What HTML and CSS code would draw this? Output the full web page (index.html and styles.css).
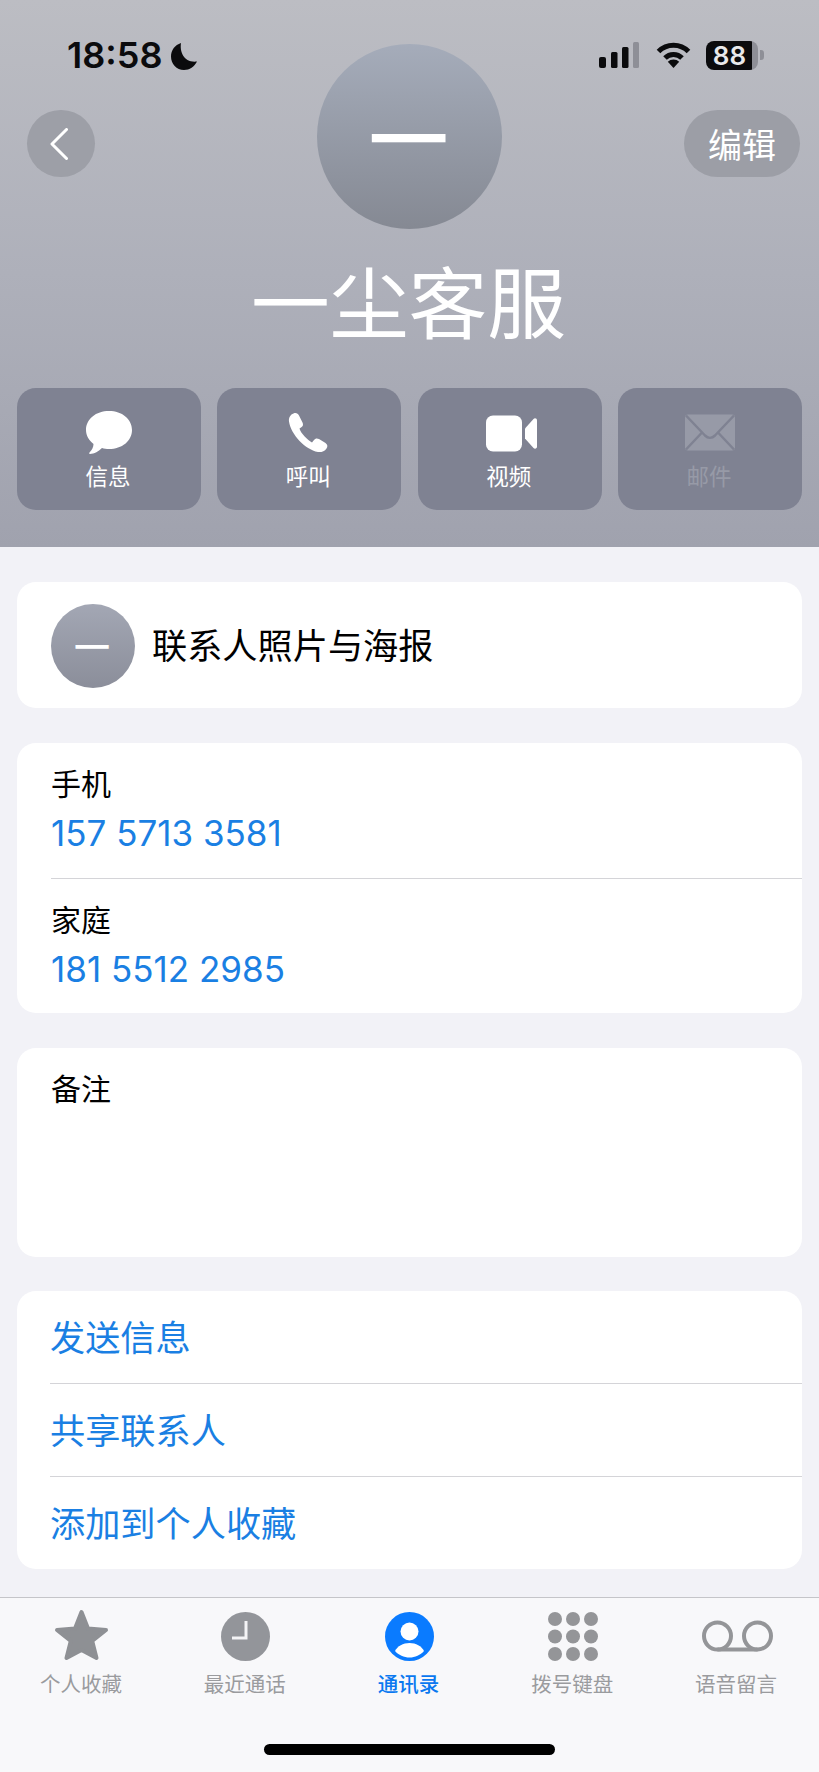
FILE: index.html
```html
<!DOCTYPE html>
<html lang="zh">
<head>
<meta charset="utf-8">
<title>一尘客服</title>
<link rel="stylesheet" href="styles.css">
</head>
<body>
<div class="phone">
  <header class="hero">
    <div class="status">
      <div class="status-left">
        <span class="time">18:58</span>
        <svg class="moon" width="26" height="27" viewBox="0 0 26 27"><path d="M10 0C8.500 9 13 20 26 18.500C23.500 23.500 18.500 27 13 27C5.500 27 0 21 0 13.500C0 7 4 2 10 0Z"/></svg>
      </div>
      <div class="status-right">
        <svg class="signal" width="40" height="26" viewBox="0 0 40 26"><rect x="0" y="15" width="7" height="11" rx="2"/><rect x="12" y="10" width="6.500" height="16" rx="1.500"/><rect x="23" y="5" width="6.500" height="21" rx="1.500"/><rect class="dim" x="34" y="0" width="6" height="26" rx="1.500"/></svg>
        <svg class="wifi" width="35" height="26" viewBox="0 0 35 26"><path class="arc" d="M2.500 9.500A21 21 0 0 1 32.500 9.500"/><path class="arc" d="M9 16A12 12 0 0 1 26 16"/><path d="M11.800 19.800A8 8 0 0 1 23.200 19.800L17.500 26Z"/></svg>
        <div class="battery"><div class="battery-body"><span class="battery-num">88</span></div><i class="battery-nub"></i></div>
      </div>
    </div>
    <div class="nav">
      <button class="round back" aria-label="返回"><svg width="18" height="32" viewBox="0 0 18 32"><path class="chev" d="M16.500 1.500L2 16L16.500 30.500"/></svg></button>
      <div class="avatar avatar-big"><span>一</span></div>
      <button class="round edit">编辑</button>
    </div>
    <h1 class="name">一尘客服</h1>
    <div class="actions">
      <div class="action">
        <svg width="46" height="43" viewBox="0 0 46 43"><path d="M23 0C36 0 46 8 46 19C46 30 36 38 23 38C20.500 38 18 37.700 16 37C13 40 8 43 4 43C3 43 3 42 3.500 41.500C6 39 7.500 36 7.500 33C3 29.500 0 24.500 0 19C0 8 10 0 23 0Z"/></svg>
        <span>信息</span>
      </div>
      <div class="action">
        <svg class="phone-ic" width="40" height="40" viewBox="0 0 40 40"><path d="M5.500 1C8 0 10 1 11 3L14.500 10C15.500 12 15 14 13 15L11.500 16C13 21 19 27 24 30L26 27.500C27 26 29 25.500 31 26.500L37.500 30.500C39.500 32 40 34 38.500 36C36.500 39 33 40 30 39.500C17 37 3 22 1 9C0.500 5 2.500 2 5.500 1Z"/></svg>
        <span>呼叫</span>
      </div>
      <div class="action">
        <svg class="video-ic" width="51" height="36" viewBox="0 0 51 36"><rect x="0" y="0" width="36" height="36" rx="7"/><path d="M39 13L47.500 3.500C49 2 51 3 51 5V31C51 33 49 34 47.500 32.500L39 23Z"/></svg>
        <span>视频</span>
      </div>
      <div class="action off">
        <svg width="50" height="36" viewBox="0 0 50 36"><rect class="env" x="0" y="0" width="50" height="36" rx="3"/><path class="env-line" d="M1 1L20 21C23 24 27 24 30 21L49 1M1 35L17 18M49 35L33 18"/></svg>
        <span>邮件</span>
      </div>
    </div>
  </header>

  <main class="list">
    <section class="card poster">
      <div class="avatar avatar-small"><span>一</span></div>
      <span class="poster-text">联系人照片与海报</span>
    </section>
    <section class="card numbers">
      <div class="field">
        <div class="field-label">手机</div>
        <div class="field-value">157 5713 3581</div>
      </div>
      <div class="field">
        <div class="field-label">家庭</div>
        <div class="field-value">181 5512 2985</div>
      </div>
    </section>
    <section class="card notes">
      <div class="field-label">备注</div>
    </section>
    <section class="card links">
      <div class="link">发送信息</div>
      <div class="link">共享联系人</div>
      <div class="link">添加到个人收藏</div>
    </section>
  </main>

  <nav class="tabs">
    <div class="tab">
      <div class="tab-icon"><svg width="55" height="52" viewBox="0 0 55 52"><path class="star" d="M27.500 3L34 19.500L52 21L38.200 32L42.500 49L27.500 41L12.500 49L16.800 32L3 21L21 19.500Z"/></svg></div>
      <span>个人收藏</span>
    </div>
    <div class="tab">
      <div class="tab-icon"><svg width="49" height="49" viewBox="0 0 49 49"><circle class="gray" cx="24.500" cy="24.500" r="24.500"/><path class="hand" d="M25 9V26H11"/></svg></div>
      <span>最近通话</span>
    </div>
    <div class="tab active">
      <div class="tab-icon"><svg width="49" height="49" viewBox="0 0 49 49"><circle class="blue" cx="24.500" cy="24.500" r="24.500"/><circle class="wht" cx="24.500" cy="19.500" r="9"/><path class="wht" d="M10 39C12.500 34 18 31 24.500 31C31 31 36.500 34 39 39C35.500 43 30 45.500 24.500 45.500C19 45.500 13.500 43 10 39Z"/></svg></div>
      <span>通讯录</span>
    </div>
    <div class="tab">
      <div class="tab-icon"><svg width="51" height="49" viewBox="0 0 51 49"><g class="keys"><circle cx="7" cy="7" r="7"/><circle cx="25" cy="7" r="7"/><circle cx="43" cy="7" r="7"/><circle cx="7" cy="24.500" r="7"/><circle cx="25" cy="24.500" r="7"/><circle cx="43" cy="24.500" r="7"/><circle cx="7" cy="42" r="7"/><circle cx="25" cy="42" r="7"/><circle cx="43" cy="42" r="7"/></g></svg></div>
      <span>拨号键盘</span>
    </div>
    <div class="tab">
      <div class="tab-icon mid"><svg width="71" height="33" viewBox="0 0 71 33"><g class="vm"><circle cx="15.500" cy="17" r="13.500"/><circle cx="55.500" cy="17" r="13.500"/><path d="M15.500 30.500H55.500"/></g></svg></div>
      <span>语音留言</span>
    </div>
    <div class="home-bar"></div>
  </nav>
</div>
</body>
</html>
```
FILE: styles.css
```css
* { box-sizing: border-box; margin: 0; padding: 0; }
html, body { width: 819px; height: 1772px; overflow: hidden; }
body {
  font-family: "Inter", "Noto Sans CJK SC", sans-serif;
  background: #f2f2f7;
  color: #000;
}
.phone { width: 819px; height: 1772px; display: flex; flex-direction: column; position: relative; }

.hero {
  height: 547px;
  padding-top: 44px;
  background: linear-gradient(180deg, #bcbdc3 0%, #aeb0ba 50%, #a0a2ae 100%);
  position: relative;
  flex: none;
}
.status {
  position: absolute; left: 0; top: 0; width: 100%; height: 80px;
  display: flex; justify-content: space-between; align-items: flex-start;
  padding: 40px 55px 0 67px;
}
.status-left { display: flex; align-items: center; gap: 9px; height: 30px; }
.time { font-size: 36px; font-weight: 600; color: #0b0b0d; line-height: 30px; }
.moon { fill: #0b0b0d; margin-top: 2px; }
.status-right { display: flex; align-items: center; gap: 15px; height: 30px; }
.signal { fill: #0b0b0d; margin-right: 2px; }
.signal .dim { fill: #8e8f97; }
.wifi { fill: #0b0b0d; }
.wifi .arc { fill: none; stroke: #0b0b0d; stroke-width: 5; }
.battery { display: flex; align-items: center; gap: 2px; }
.battery-body {
  width: 52px; height: 29px; border-radius: 8px; overflow: hidden;
  background: linear-gradient(90deg, #0b0b0d 88%, #8e8f97 88%);
  display: flex; align-items: center; justify-content: center;
  padding-right: 5px;
}
.battery-num { font-size: 26px; font-weight: 600; color: #e8e8ea; line-height: 29px; }
.battery-nub { display: block; width: 4px; height: 10px; border-radius: 0 3px 3px 0; background: #8e8f97; }

.nav {
  display: grid; grid-template-columns: 1fr 185px 1fr; align-items: start;
  padding: 0 19px; height: 185px;
}
.avatar {
  border-radius: 50%;
  background: linear-gradient(180deg, #a5acba 0%, #858993 100%);
  color: #fff; display: flex; align-items: center; justify-content: center;
  font-weight: 500; font-family: "Noto Sans CJK SC", sans-serif;
}
.avatar-big { width: 185px; height: 185px; font-size: 80px; }
.avatar-big span { line-height: 1; transform: translate(-1px, -3px); }
.avatar-small { width: 84px; height: 84px; font-size: 36px; flex: none; background: linear-gradient(180deg, #a3a7b4 0%, #8b8e9a 100%); }
.avatar-small span { line-height: 1; transform: translate(-1px, -1px); }

.round {
  margin-top: 66px; height: 67px; border: 0; border-radius: 34px;
  background: #9d9fa7; color: #fff;
  display: flex; align-items: center; justify-content: center;
  font-family: inherit;
}
.back { width: 68px; margin-left: 8px; padding-right: 4px; justify-self: start; background: #9d9fa7; }
.chev { fill: none; stroke: #fff; stroke-width: 3; stroke-linecap: round; stroke-linejoin: round; }
.edit { width: 116px; justify-self: end; font-size: 34px; background: #9c9ea6; }

.name {
  font-size: 78.800px; font-weight: 400; color: #fff; text-align: center;
  line-height: 100px; margin-top: 26px; padding-right: 2px;
}
.actions {
  display: grid; grid-template-columns: repeat(4, 184px); justify-content: space-between;
  padding: 0 17px; margin-top: 33px;
}
.action {
  height: 122px; border-radius: 19px; background: #7f8292; color: #fff;
  display: flex; flex-direction: column; align-items: center; padding-top: 23px;
  font-size: 22.500px; fill: #fff;
}
.action svg { height: 43px; display: block; }
.action .phone-ic { margin-right: 2px; }
.action .video-ic { margin-left: 3px; transform: translateY(1px); }
.action span { line-height: 30px; margin: 8px 2px 0 0; }
.action.off { color: #979aa7; }
.env { fill: #979aa7; }
.env-line { fill: none; stroke: #7f8292; stroke-width: 2.500; }

.list {
  flex: 1; display: flex; flex-direction: column; gap: 34.500px;
  padding: 35px 17px 0;
}
.card { background: #fff; border-radius: 19px; overflow: hidden; flex: none; }
.poster { height: 126px; display: flex; align-items: center; padding: 2px 0 0 34px; gap: 17px; }
.poster-text { font-size: 35.200px; line-height: 44px; }
.numbers { height: 270.500px; }
.field { height: 135px; margin-left: 34px; padding-top: 21px; }
.field + .field { border-top: 1px solid #d4d4d8; height: 135.500px; }
.field-label { font-size: 30px; line-height: 40px; }
.field-value { font-size: 35px; line-height: 46px; margin-top: 6.500px; color: #1a7fe3; }
.notes { height: 209px; padding: 21px 0 0 34px; }
.links { height: 278px; }
.link { height: 93px; margin-left: 33px; padding-bottom: 4px; font-size: 35.200px; color: #1a7fe3; display: flex; align-items: center; }
.link:first-child { height: 92px; }
.link + .link { border-top: 1px solid #d4d4d8; }

.tabs {
  height: 175px; flex: none; background: #f8f8fa; border-top: 1px solid #c5c5c9;
  display: grid; grid-template-columns: repeat(5, 1fr); position: relative;
}
.tab { display: flex; flex-direction: column; align-items: center; padding-top: 11px; color: #9a9b9e; font-size: 20.500px; }
.tab-icon { height: 52px; display: flex; align-items: flex-end; justify-content: center; }
.tab-icon.mid { align-items: center; }
.tab-icon svg { display: block; }
.tab span { line-height: 28px; margin: 10px 2px 0 0; }
.tab.active { color: #0a78f0; font-weight: 500; }
.star { fill: #8e9094; stroke: #8e9094; stroke-width: 4; stroke-linejoin: round; }
.gray { fill: #93959a; }
.hand { fill: none; stroke: #f4f4f6; stroke-width: 3; }
.blue { fill: #0a7bff; }
.wht { fill: #fff; }
.keys { fill: #949598; }
.vm { fill: none; stroke: #949598; stroke-width: 4; }
.home-bar {
  position: absolute; left: 264px; top: 146px; width: 291px; height: 11px;
  border-radius: 6px; background: #000;
}
```
